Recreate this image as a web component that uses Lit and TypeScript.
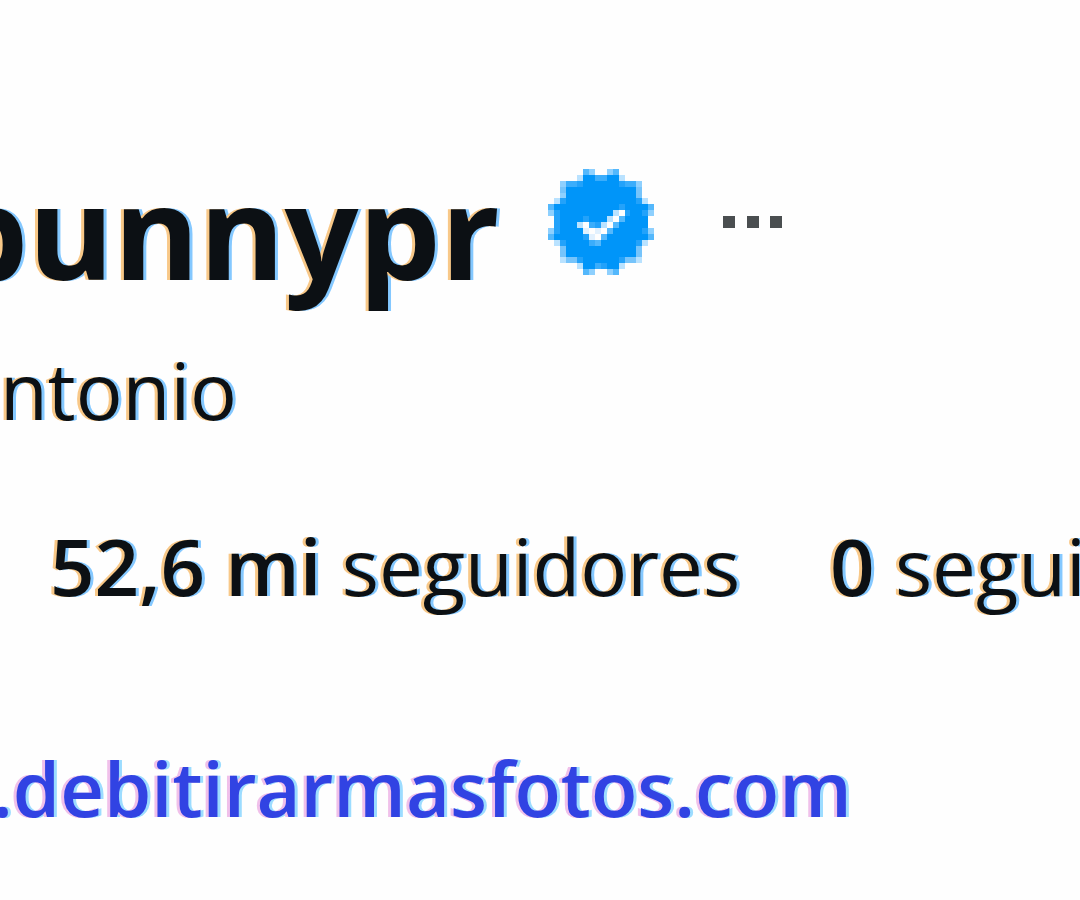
import { LitElement, html, svg, css } from "lit";
import { customElement } from "lit/decorators.js";

// Cells of the verified badge, one letter per shade; a dot is empty.
const BADGE = [
  "......dl..ld......",
  ".....pBBmmBBp.....",
  "..lmmnBBBBBBnmml..",
  "..kBBBBBBBBBBBBk..",
  "..lBBBBBBBBBBBBk..",
  ".pnBBBBBBBBBBBBnp.",
  "dBBBBBBBBBBBnBBBBd",
  "lnBBBBBBBBBpwnBBnl",
  ".nBBBBnBBBpwdBBBB.",
  ".nBBBpwmnpwdBBBBB.",
  "lnBBBBvwvwdBBBBBnl",
  "dBBBBBnvwdBBBBBBBd",
  ".pnBBBBmdBBBBBBnp.",
  "..kBBBBBBBBBBBBk..",
  "..kBBBBBBBBBBBBk..",
  "..pkknBBBBBBnkkp..",
  ".....pBBmnBBp.....",
  "......dl..ld......",
];

const SHADES: Record<string, string> = {
  B: "#0095f9",
  n: "#23a2fa",
  m: "#3badfb",
  d: "#54b8fc",
  k: "#76c4fb",
  l: "#8ed0fe",
  p: "#b9e2ff",
  v: "#e2f1fe",
  w: "#fefefe",
};

@customElement("app-root")
export class AppRoot extends LitElement {
  static styles = css`
    :host {
      display: block;
      min-height: 100vh;
      background: #fefefe;
      color: #0c1014;
      font-family: "Open Sans", "Noto Sans", sans-serif;
      overflow: hidden;
    }
    .profile {
      display: flex;
      flex-direction: column;
      padding-top: 152px;
      white-space: nowrap;
    }
    .title {
      display: flex;
      align-items: center;
      height: 140px;
    }
    .name {
      margin: 0 0 0 -54px;
      padding-top: 16px;
      font-size: 130px;
      line-height: 140px;
      font-weight: 700;
    }
    .name,
    .text {
      text-shadow: -3px 0 #f8c888, 3px 0 #84c8ff;
    }
    .badge {
      display: block;
      flex: none;
      width: 106px;
      height: 106px;
      margin-left: 48px;
    }
    .more {
      margin-left: 69px;
      padding: 0;
      border: 0;
      background: none;
      cursor: pointer;
    }
    .dots {
      display: block;
      width: 60px;
      height: 12px;
    }
    .text {
      margin: 0;
      font-size: 78px;
      line-height: 104px;
      font-weight: 400;
    }
    .full {
      margin-top: 46px;
    }
    .stats {
      display: flex;
      gap: 90px;
      margin-top: 72px;
      padding: 0 0 0 50px;
      list-style: none;
    }
    .count {
      font-weight: 600;
    }
    .site {
      margin-top: 118px;
      margin-left: -8px;
      font-size: 76px;
    }
    .link {
      color: #3143e3;
      font-weight: 600;
      text-decoration: none;
      text-shadow: -3px 0 #f0c0ea, 3px 0 #9cdcff;
    }
  `;

  private cells() {
    return BADGE.flatMap((row, y) =>
      [...row].map((c, x) =>
        c === "."
          ? null
          : svg`<rect x=${x} y=${y} width="1" height="1" fill=${SHADES[c]}></rect>`
      )
    );
  }

  render() {
    return html`
      <main class="profile">
        <header class="title">
          <h1 class="name">bunnypr</h1>
          <svg class="badge" viewBox="0 0 18 18" shape-rendering="crispEdges" role="img" aria-label="Verificado">
            ${this.cells()}
          </svg>
          <button class="more" type="button" aria-label="Mais">
            <svg class="dots" viewBox="0 0 60 12" fill="#4a4e50" aria-hidden="true">
              <rect width="12" height="12"></rect>
              <rect x="24" width="12" height="12"></rect>
              <rect x="47" width="12" height="12"></rect>
            </svg>
          </button>
        </header>
        <p class="text full">ntonio</p>
        <ul class="text stats">
          <li><span class="count">52,6 mi</span> seguidores</li>
          <li><span class="count">0</span> segui</li>
        </ul>
        <p class="text site"><a class="link" href="#">.debitirarmasfotos.com</a></p>
      </main>
    `;
  }
}
